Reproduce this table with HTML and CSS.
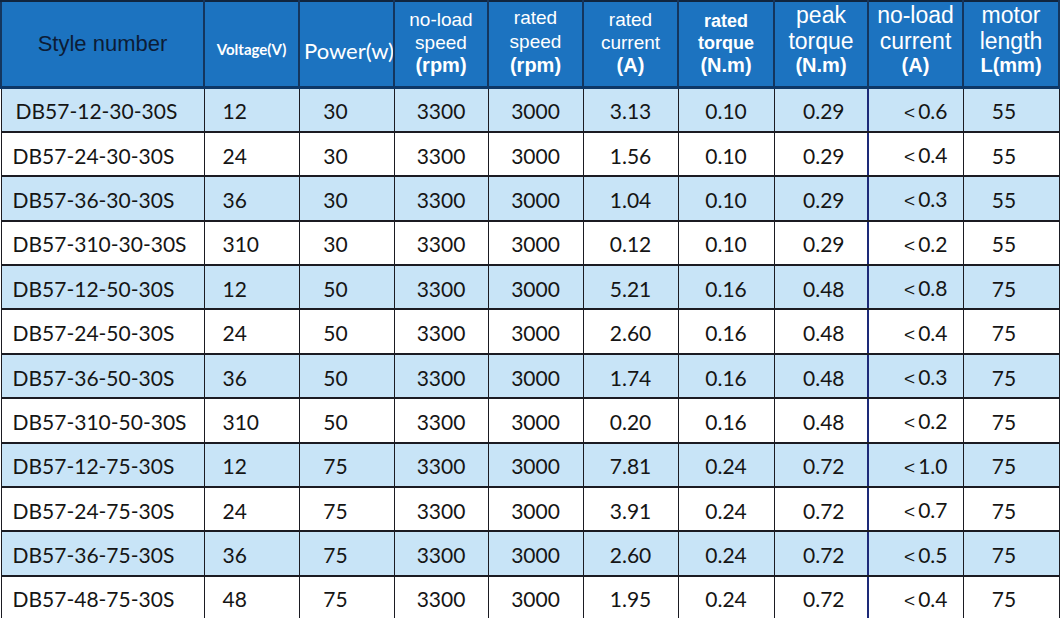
FILE: index.html
```html
<!DOCTYPE html>
<html>
<head>
<meta charset="utf-8">
<title>DB57 motor specifications</title>
<link rel="stylesheet" href="styles.css">
</head>
<body>
<table class="spec">
  <colgroup>
    <col class="c-style"><col class="c-95"><col class="c-95"><col class="c-94"><col class="c-95"><col class="c-95"><col class="c-96"><col class="c-94"><col class="c-95"><col class="c-96">
  </colgroup>
  <thead>
    <tr class="head">
      <th class="h-style">Style number</th>
      <th class="h-volt">Voltage(V)</th>
      <th class="h-power">Power(w)</th>
      <th class="h-multi"><span class="l s18">no-load</span><span class="l s18">speed</span><span class="l u">(rpm)</span></th>
      <th class="h-multi"><span class="l s19">rated</span><span class="l s19">speed</span><span class="l u">(rpm)</span></th>
      <th class="h-multi"><span class="l s18">rated</span><span class="l s18">current</span><span class="l u">(A)</span></th>
      <th class="h-multi"><span class="l s17b">rated</span><span class="l s17b">torque</span><span class="l u">(N.m)</span></th>
      <th class="h-multi"><span class="l s23">peak</span><span class="l s23">torque</span><span class="l u">(N.m)</span></th>
      <th class="h-multi sep"><span class="l s23">no-load</span><span class="l s23">current</span><span class="l u">(A)</span></th>
      <th class="h-multi"><span class="l s23">motor</span><span class="l s23">length</span><span class="l u">L(mm)</span></th>
    </tr>
  </thead>
  <tbody>
    <tr class="blue"><td class="name first">DB57-12-30-30S</td><td class="volt">12</td><td>30</td><td>3300</td><td>3000</td><td>3.13</td><td>0.10</td><td>0.29</td><td class="nl sep"><span class="lt">&lt;</span>0.6</td><td>55</td></tr>
    <tr><td class="name">DB57-24-30-30S</td><td class="volt">24</td><td>30</td><td>3300</td><td>3000</td><td>1.56</td><td>0.10</td><td>0.29</td><td class="nl sep"><span class="lt">&lt;</span>0.4</td><td>55</td></tr>
    <tr class="blue"><td class="name">DB57-36-30-30S</td><td class="volt">36</td><td>30</td><td>3300</td><td>3000</td><td>1.04</td><td>0.10</td><td>0.29</td><td class="nl sep"><span class="lt">&lt;</span>0.3</td><td>55</td></tr>
    <tr><td class="name">DB57-310-30-30S</td><td class="volt">310</td><td>30</td><td>3300</td><td>3000</td><td>0.12</td><td>0.10</td><td>0.29</td><td class="nl sep"><span class="lt">&lt;</span>0.2</td><td>55</td></tr>
    <tr class="blue"><td class="name">DB57-12-50-30S</td><td class="volt">12</td><td>50</td><td>3300</td><td>3000</td><td>5.21</td><td>0.16</td><td>0.48</td><td class="nl sep"><span class="lt">&lt;</span>0.8</td><td>75</td></tr>
    <tr><td class="name">DB57-24-50-30S</td><td class="volt">24</td><td>50</td><td>3300</td><td>3000</td><td>2.60</td><td>0.16</td><td>0.48</td><td class="nl sep"><span class="lt">&lt;</span>0.4</td><td>75</td></tr>
    <tr class="blue"><td class="name">DB57-36-50-30S</td><td class="volt">36</td><td>50</td><td>3300</td><td>3000</td><td>1.74</td><td>0.16</td><td>0.48</td><td class="nl sep"><span class="lt">&lt;</span>0.3</td><td>75</td></tr>
    <tr><td class="name">DB57-310-50-30S</td><td class="volt">310</td><td>50</td><td>3300</td><td>3000</td><td>0.20</td><td>0.16</td><td>0.48</td><td class="nl sep"><span class="lt">&lt;</span>0.2</td><td>75</td></tr>
    <tr class="blue"><td class="name">DB57-12-75-30S</td><td class="volt">12</td><td>75</td><td>3300</td><td>3000</td><td>7.81</td><td>0.24</td><td>0.72</td><td class="nl sep"><span class="lt">&lt;</span>1.0</td><td>75</td></tr>
    <tr><td class="name">DB57-24-75-30S</td><td class="volt">24</td><td>75</td><td>3300</td><td>3000</td><td>3.91</td><td>0.24</td><td>0.72</td><td class="nl sep"><span class="lt">&lt;</span>0.7</td><td>75</td></tr>
    <tr class="blue"><td class="name">DB57-36-75-30S</td><td class="volt">36</td><td>75</td><td>3300</td><td>3000</td><td>2.60</td><td>0.24</td><td>0.72</td><td class="nl sep"><span class="lt">&lt;</span>0.5</td><td>75</td></tr>
    <tr><td class="name">DB57-48-75-30S</td><td class="volt">48</td><td>75</td><td>3300</td><td>3000</td><td>1.95</td><td>0.24</td><td>0.72</td><td class="nl sep"><span class="lt">&lt;</span>0.4</td><td>75</td></tr>
  </tbody>
</table>
</body>
</html>
```

FILE: styles.css
```css
html, body {
  margin: 0;
  padding: 0;
  background: #ffffff;
}

.spec {
  border-collapse: collapse;
  table-layout: fixed;
  width: 1059px;
  font-family: Lato, "Open Sans", sans-serif;
  color: #151515;
}

.c-style { width: 203px; }
.c-94 { width: 94px; }
.c-95 { width: 95px; }
.c-96 { width: 96px; }

.spec th,
.spec td {
  padding: 0;
  overflow: hidden;
  white-space: nowrap;
}

/* header */
.head {
  height: 85px;
}

.head th {
  background: #1c73c0;
  color: #ffffff;
  font-weight: normal;
  border-top: 2px solid #10253f;
  border-bottom: 3px solid #0d3766;
  border-left: 2px solid #14365e;
  border-right: 2px solid #14365e;
}

.head th.h-style {
  font-family: "Liberation Sans", Arial, sans-serif;
  font-size: 22px;
  color: #0c1c36;
  vertical-align: middle;
}

.head th.h-volt {
  font-family: Lato, sans-serif;
  font-size: 15px;
  font-weight: bold;
  vertical-align: middle;
  padding-top: 10px;
}

.head th.h-power {
  font-family: Lato, sans-serif;
  font-size: 22px;
  vertical-align: middle;
  text-align: left;
  padding-top: 12px;
  padding-left: 4px;
}

.head th.h-multi {
  vertical-align: bottom;
  font-family: "Liberation Sans", Arial, sans-serif;
  padding-bottom: 10px;
}

.l {
  display: block;
  line-height: 22px;
}

.s17b { font-size: 18px; font-weight: bold; line-height: 22px; }
.s18 { font-size: 19px; line-height: 23px; }
.s19 { font-size: 19px; line-height: 24px; }
.s23 { font-size: 23px; line-height: 26px; }
.u { font-size: 20px; font-weight: bold; line-height: 22px; }

/* body */
.spec tbody tr {
  height: 44.4px;
}

.spec tbody td {
  font-size: 21px;
  text-align: center;
  vertical-align: middle;
  border: 2px solid #1b1b22;
  border-left-width: 1px;
  border-right-width: 1px;
  padding-top: 2px;
}

.spec tbody tr.blue td {
  background: #c8e4f7;
}

.spec tbody td.name {
  text-align: left;
  padding-left: 11px;
}

.spec tbody td.name.first {
  padding-left: 14px;
}

.spec tbody td.volt {
  text-align: left;
  padding-left: 18px;
}

.spec tbody td:nth-child(3) {
  padding-right: 22px;
}

.spec tbody td:nth-child(8) {
  padding-left: 6px;
}

.spec tbody td:last-child {
  padding-right: 14px;
}

.spec tbody td.nl {
  text-align: right;
  padding-right: 15px;
}

.lt {
  font-family: "Liberation Sans", Arial, sans-serif;
  font-size: 19px;
  margin-right: 3px;
}

.spec tbody td.sep {
  border-left: 2px solid #1d2a78;
}
```
